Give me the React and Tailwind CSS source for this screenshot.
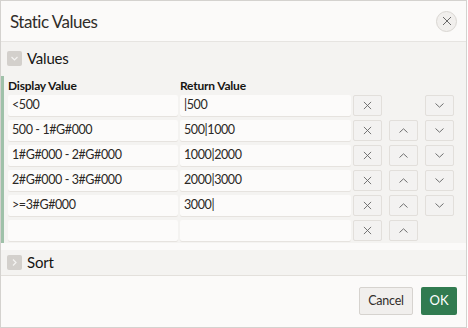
import React from 'react';

const rows = [
    { display: '<500', ret: '|500', up: false, down: true },
    { display: '500 - 1#G#000', ret: '500|1000', up: true, down: true },
    { display: '1#G#000 - 2#G#000', ret: '1000|2000', up: true, down: true },
    { display: '2#G#000 - 3#G#000', ret: '2000|3000', up: true, down: true },
    { display: '>=3#G#000', ret: '3000|', up: true, down: true },
    { display: '', ret: '', up: true, down: false },
];

const XIcon = ({ size = 10, color = '#5f5f5f' }) => (
    <svg width={size} height={size} viewBox="0 0 10 10" fill="none" stroke={color} strokeWidth="1">
        <path d="M1 1 L9 9 M9 1 L1 9" />
    </svg>
);

const Chevron = ({ dir }) => (
    <svg width="9" height="5" viewBox="0 0 9 5" fill="none" stroke="#6f6f6f" strokeWidth="1">
        {dir === 'up' ? <path d="M0.5 4.5 L4.5 0.8 L8.5 4.5" /> : <path d="M0.5 0.5 L4.5 4.2 L8.5 0.5" />}
    </svg>
);

const IconBtn = ({ children }) => (
    <div className="w-[29px] h-[21px] flex items-center justify-center bg-[#f3f2f1] border border-[#e2dfdb] rounded-[2px]">
        {children}
    </div>
);

const Toggle = ({ open }) => (
    <div className="w-[15px] h-[15px] rounded-[2px] bg-[#d3d0cc] flex items-center justify-center">
        <svg width="9" height="9" viewBox="0 0 9 9" fill="none" stroke="#f5f4f2" strokeWidth="1.2">
            {open ? <path d="M1.5 3 L4.5 6 L7.5 3" /> : <path d="M3 1.5 L6 4.5 L3 7.5" />}
        </svg>
    </div>
);

export default function App() {
    return (
        <div className="w-[468px] h-[328px] bg-white" style={{ fontFamily: 'Lato, "Noto Sans", sans-serif' }}>
            <div className="w-[467px] h-[328px] flex flex-col border border-[#d4d2cf] bg-[#fbfaf9] text-[#161513]">
                {/* Header */}
                <div className="h-[41px] shrink-0 flex items-center justify-between pl-[9px] pr-[9px] border-b border-[#e6e4e1]">
                    <span className="text-[17px] tracking-[-0.5px] text-[#312d2a] pt-[1px]">Static Values</span>
                    <div className="w-[21px] h-[21px] rounded-full bg-[#f1efed] border border-[#d9d6d2] flex items-center justify-center">
                        <XIcon size={10} color="#6a6a6a" />
                    </div>
                </div>

                {/* Values */}
                <div className="bg-[#f4f3f1] shrink-0 h-[34px] flex items-start gap-[5px] pl-[6px] pt-[9px]">
                    <Toggle open />
                    <span className="text-[15px] leading-[15px] tracking-[-0.2px] text-[#161513]">Values</span>
                </div>
                <div className="bg-[#f4f3f1] border-l-[3px] border-[#9fc1a9] pl-[4px] pb-[2px] shrink-0">
                    <div className="flex h-[19px] items-center text-[12px] font-bold tracking-[-0.2px] text-[#161513]">
                        <span className="w-[172px]">Display Value</span>
                        <span>Return Value</span>
                    </div>
                    <div className="flex flex-col gap-[4px]">
                        {rows.map((r, i) => (
                            <div key={i} className="flex items-center h-[21px]">
                                <div className="w-[170px] h-[21px] bg-[#fcfbfa] rounded-[2px] shadow-[0_1px_0_#e6e3df] flex items-center pl-[4px] text-[12.5px] tracking-[-0.4px] text-[#2b2825]">
                                    {r.display}
                                </div>
                                <div className="w-[171px] h-[21px] ml-[2px] bg-[#fcfbfa] rounded-[2px] shadow-[0_1px_0_#e6e3df] flex items-center pl-[4px] text-[12.5px] tracking-[-0.4px] text-[#2b2825]">
                                    {r.ret}
                                </div>
                                <div className="ml-[2px]">
                                    <IconBtn><XIcon size={9} color="#666" /></IconBtn>
                                </div>
                                <div className="ml-[7px] w-[29px]">
                                    {r.up && <IconBtn><Chevron dir="up" /></IconBtn>}
                                </div>
                                <div className="ml-[7px] w-[29px]">
                                    {r.down && <IconBtn><Chevron dir="down" /></IconBtn>}
                                </div>
                            </div>
                        ))}
                    </div>
                </div>

                {/* Sort */}
                <div className="mt-[7px] h-[26px] shrink-0 bg-[#f4f3f1] border-b border-[#e3e0dc] flex items-center gap-[5px] pl-[6px]">
                    <Toggle />
                    <span className="text-[15px] tracking-[-0.2px] text-[#161513]">Sort</span>
                </div>

                {/* Footer */}
                <div className="flex-1 flex items-start justify-end gap-[8px] pr-[9px] pt-[11px]">
                    <button className="w-[54px] h-[28px] bg-[#f1efed] border border-[#d6d3cf] rounded-[2px] text-[12.5px] tracking-[-0.2px] text-[#312d2a]">
                        Cancel
                    </button>
                    <button className="w-[36px] h-[28px] bg-[#317b50] rounded-[2px] text-[13px] text-white">
                        OK
                    </button>
                </div>
            </div>
        </div>
    );
}
